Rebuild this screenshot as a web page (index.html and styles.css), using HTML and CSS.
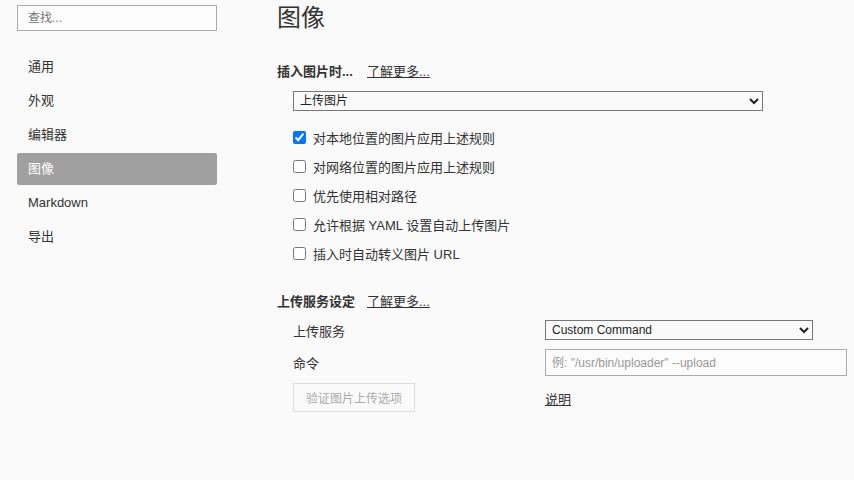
FILE: index.html
```html
<!DOCTYPE html>
<html>
<head>
<meta charset="utf-8">
<title>偏好设置</title>
<link rel="stylesheet" href="styles.css">
</head>
<body>
<div class="wrap">
  <div class="side">
    <input type="text" class="search" placeholder="查找...">
    <ul class="nav">
      <li>通用</li>
      <li>外观</li>
      <li>编辑器</li>
      <li class="active">图像</li>
      <li>Markdown</li>
      <li>导出</li>
    </ul>
  </div>

  <div class="main">
    <h1>图像</h1>

    <div class="sect first">
      <b>插入图片时...</b><a href="#">了解更多...</a>
    </div>
    <select class="wide">
      <option>上传图片</option>
    </select>

    <ul class="checks">
      <li><input type="checkbox" checked><span>对本地位置的图片应用上述规则</span></li>
      <li><input type="checkbox"><span>对网络位置的图片应用上述规则</span></li>
      <li><input type="checkbox"><span>优先使用相对路径</span></li>
      <li><input type="checkbox"><span>允许根据 YAML 设置自动上传图片</span></li>
      <li><input type="checkbox"><span>插入时自动转义图片 URL</span></li>
    </ul>

    <div class="sect">
      <b>上传服务设定</b><a href="#">了解更多...</a>
    </div>

    <div class="grid">
      <span>上传服务</span>
      <select class="svc">
        <option>Custom Command</option>
      </select>
      <span>命令</span>
      <input type="text" class="cmd" placeholder='例: "/usr/bin/uploader" --upload'>
      <div class="btnrow"><button class="verify">验证图片上传选项</button></div>
      <div><a href="#">说明</a></div>
    </div>
  </div>
</div>
</body>
</html>
```

FILE: styles.css
```css
body {
  margin: 0;
  background: #fafafa;
  color: #333;
  font-family: "Liberation Sans", "Noto Sans CJK SC", sans-serif;
  font-size: 13px;
}
.wrap { display: flex; }
.side { width: 200px; padding: 5px 60px 0 17px; }
.search {
  box-sizing: border-box;
  width: 200px;
  height: 26px;
  margin: 0;
  padding: 0 10px;
  border: 1px solid #aaa;
  background: #fcfcfc;
  font: inherit;
  font-size: 12px;
  color: #333;
  outline: none;
}
.search::placeholder { color: #777; }
.nav { list-style: none; margin: 20px 0 0; padding: 0; }
.nav li {
  height: 32px;
  line-height: 32px;
  margin-bottom: 2px;
  padding-left: 11px;
  border-radius: 2px;
}
.nav li.active { background: #a0a0a0; color: #fff; }

.main { flex: 1; }
h1 {
  margin: 3px 0 0;
  font-size: 24px;
  font-weight: normal;
  line-height: 30px;
}
.sect { line-height: 20px; margin-top: 24px; }
.sect.first { margin-top: 29px; }
.sect b { display: inline-block; width: 90px; }
a { color: #333; }
.wide, .svc {
  box-sizing: border-box;
  height: 20px;
  border: 1px solid #777;
  border-radius: 0;
  background: #fafafa;
  font: inherit;
  font-size: 12px;
  color: #222;
  padding: 0 2px;
}
.wide { width: 470px; margin: 9px 0 0 16px; display: block; }
.checks { list-style: none; margin: 12px 0 0 16px; padding: 0; }
.checks li { height: 29px; display: flex; align-items: center; gap: 7px; }
.checks input { margin: 0; width: 13px; height: 13px; }

.grid {
  display: grid;
  grid-template-columns: 252px auto;
  row-gap: 9px;
  margin: 8px 0 0 16px;
  align-items: center;
}
.btnrow { margin-top: -2px; }
.svc { width: 268px; }
.cmd {
  box-sizing: border-box;
  width: 302px;
  height: 27px;
  margin: 0;
  padding: 0 6px;
  border: 1px solid #aaa;
  background: #fcfcfc;
  font: inherit;
  font-size: 12px;
  outline: none;
}
.cmd::placeholder { color: #999; }
.verify {
  height: 29px;
  padding: 0 12px;
  border: 1px solid #ddd;
  background: #fafafa;
  color: #aaa;
  font: inherit;
  font-size: 12px;
}
```
